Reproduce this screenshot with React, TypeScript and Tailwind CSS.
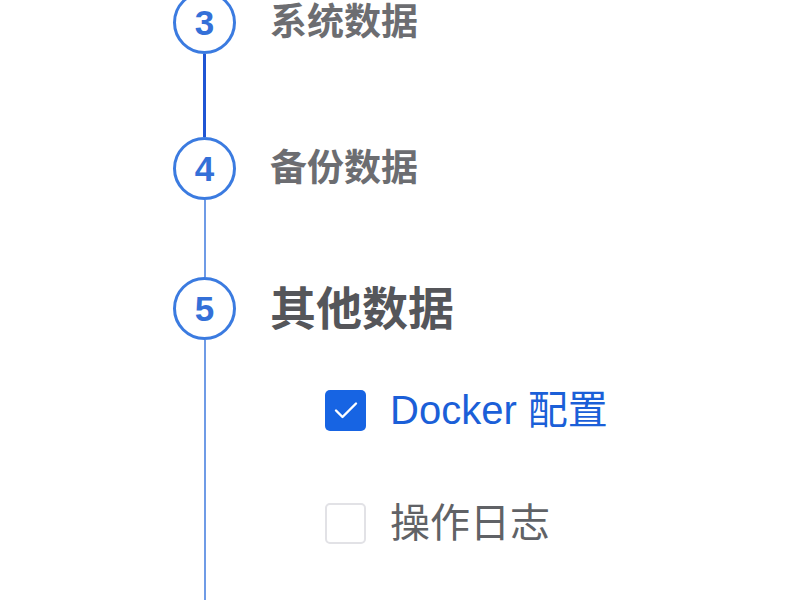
import React, { useState } from 'react';

const font = { fontFamily: '"Liberation Sans", "Noto Sans CJK SC", sans-serif' };

function StepCircle({ n }: { n: number }) {
  return (
    <div className="w-[63px] h-[63px] shrink-0 rounded-full border-[3px] border-[#3b7be0] bg-white flex items-center justify-center">
      <span className="text-[35px] font-bold leading-none text-[#3470d8]">{n}</span>
    </div>
  );
}

function CheckRow({ label, checked, onToggle }: { label: string; checked: boolean; onToggle: () => void }) {
  return (
    <div className="flex items-center h-[40px] cursor-pointer" onClick={onToggle}>
      {checked ? (
        <div className="w-[41px] h-[41px] rounded-[5px] bg-[#1764e3] flex items-center justify-center">
          <svg width="26" height="20" viewBox="0 0 26 20" fill="none">
            <path d="M3 10.5l6.5 6.5L23 3.5" stroke="white" strokeWidth="2.4" strokeLinecap="round" strokeLinejoin="round" />
          </svg>
        </div>
      ) : (
        <div className="w-[41px] h-[41px] rounded-[5px] border-2 border-[#e2e2e6] bg-white" />
      )}
      <span className={`ml-[24px] text-[40px] leading-none ${checked ? 'text-[#1b5fd8]' : 'text-[#606266]'}`}>
        {label}
      </span>
    </div>
  );
}

export default function App() {
  const [docker, setDocker] = useState(true);
  const [logs, setLogs] = useState(false);

  return (
    <div className="w-[800px] h-[600px] overflow-hidden bg-white" style={font}>
      <div className="mt-[-9px] pl-[173px] flex flex-col">
        {/* step 3 */}
        <div className="flex h-[146px]">
          <div className="w-[63px] flex flex-col items-center">
            <StepCircle n={3} />
            <div className="w-[3px] flex-1 bg-[#1f55d4]" />
          </div>
          <div className="pl-[34px] h-[63px] flex items-center">
            <span className="text-[37px] font-bold text-[#6c6d71] leading-none">系统数据</span>
          </div>
        </div>

        {/* step 4 */}
        <div className="flex h-[140px]">
          <div className="w-[63px] flex flex-col items-center">
            <StepCircle n={4} />
            <div className="w-[2px] flex-1 bg-[#6f9be6]" />
          </div>
          <div className="pl-[34px] h-[63px] flex items-center">
            <span className="text-[37px] font-bold text-[#6c6d71] leading-none">备份数据</span>
          </div>
        </div>

        {/* step 5 */}
        <div className="flex h-[400px]">
          <div className="w-[63px] flex flex-col items-center">
            <StepCircle n={5} />
            <div className="w-[2px] flex-1 bg-[#6f9be6]" />
          </div>
          <div className="pl-[34px] flex flex-col">
            <div className="h-[63px] flex items-center">
              <span className="text-[46px] font-bold text-[#55565a] leading-none">其他数据</span>
            </div>
            <div className="pl-[55px] pt-[50px] flex flex-col gap-[73px]">
              <CheckRow label="Docker 配置" checked={docker} onToggle={() => setDocker(!docker)} />
              <CheckRow label="操作日志" checked={logs} onToggle={() => setLogs(!logs)} />
            </div>
          </div>
        </div>
      </div>
    </div>
  );
}
